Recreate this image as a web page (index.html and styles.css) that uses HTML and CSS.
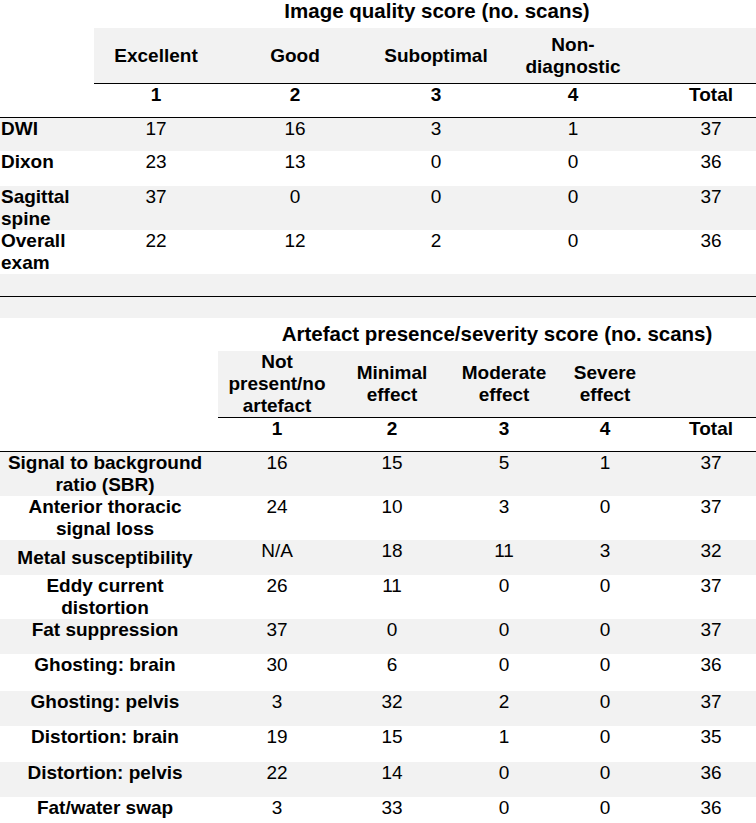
FILE: index.html
```html
<!DOCTYPE html>
<html lang="en">
<head>
<meta charset="utf-8">
<title>Image quality and artefact scores</title>
<link rel="stylesheet" href="styles.css">
</head>
<body>
<table class="tbl quality">
  <colgroup>
    <col class="q-label"><col class="q-c1"><col class="q-c2"><col class="q-c3"><col class="q-c4"><col class="q-c5">
  </colgroup>
  <tr class="row-title">
    <td></td>
    <th colspan="5" class="title">Image quality score (no. scans)</th>
  </tr>
  <tr class="row-head">
    <td></td>
    <th class="hd">Excellent</th>
    <th class="hd">Good</th>
    <th class="hd">Suboptimal</th>
    <th class="hd">Non-<br>diagnostic</th>
    <th class="hd last"></th>
  </tr>
  <tr class="row-num">
    <td></td><th>1</th><th>2</th><th>3</th><th>4</th><th class="last">Total</th>
  </tr>
  <tr class="r-dwi shade">
    <th class="lbl">DWI</th><td>17</td><td>16</td><td>3</td><td>1</td><td class="last">37</td>
  </tr>
  <tr class="r-dixon">
    <th class="lbl">Dixon</th><td>23</td><td>13</td><td>0</td><td>0</td><td class="last">36</td>
  </tr>
  <tr class="r-two shade">
    <th class="lbl">Sagittal<br>spine</th><td>37</td><td>0</td><td>0</td><td>0</td><td class="last">37</td>
  </tr>
  <tr class="r-two">
    <th class="lbl">Overall<br>exam</th><td>22</td><td>12</td><td>2</td><td>0</td><td class="last">36</td>
  </tr>
  <tr class="r-end shade">
    <td></td><td></td><td></td><td></td><td></td><td class="last"></td>
  </tr>
</table>
<div class="spacer"></div>
<table class="tbl artefact">
  <colgroup>
    <col class="a-label"><col class="a-c1"><col class="a-c2"><col class="a-c3"><col class="a-c4"><col class="a-c5">
  </colgroup>
  <tr class="row-title2">
    <td></td>
    <th colspan="5" class="title title2">Artefact presence/severity score (no. scans)</th>
  </tr>
  <tr class="row-head2">
    <td></td>
    <th class="hd">Not<br>present/no<br>artefact</th>
    <th class="hd">Minimal<br>effect</th>
    <th class="hd">Moderate<br>effect</th>
    <th class="hd">Severe<br>effect</th>
    <th class="hd last"></th>
  </tr>
  <tr class="row-num2">
    <td></td><th>1</th><th>2</th><th>3</th><th>4</th><th class="last">Total</th>
  </tr>
  <tr class="r-44 shade">
    <th class="lbl">Signal to background<br>ratio (SBR)</th><td>16</td><td>15</td><td>5</td><td>1</td><td class="last">37</td>
  </tr>
  <tr class="r-44">
    <th class="lbl">Anterior thoracic<br>signal loss</th><td>24</td><td>10</td><td>3</td><td>0</td><td class="last">37</td>
  </tr>
  <tr class="r-35 shade">
    <th class="lbl mid">Metal susceptibility</th><td>N/A</td><td>18</td><td>11</td><td>3</td><td class="last">32</td>
  </tr>
  <tr class="r-44">
    <th class="lbl">Eddy current<br>distortion</th><td>26</td><td>11</td><td>0</td><td>0</td><td class="last">37</td>
  </tr>
  <tr class="r-35 shade">
    <th class="lbl">Fat suppression</th><td>37</td><td>0</td><td>0</td><td>0</td><td class="last">37</td>
  </tr>
  <tr class="r-37">
    <th class="lbl">Ghosting: brain</th><td>30</td><td>6</td><td>0</td><td>0</td><td class="last">36</td>
  </tr>
  <tr class="r-35 shade">
    <th class="lbl">Ghosting: pelvis</th><td>3</td><td>32</td><td>2</td><td>0</td><td class="last">37</td>
  </tr>
  <tr class="r-36">
    <th class="lbl">Distortion: brain</th><td>19</td><td>15</td><td>1</td><td>0</td><td class="last">35</td>
  </tr>
  <tr class="r-35 shade">
    <th class="lbl">Distortion: pelvis</th><td>22</td><td>14</td><td>0</td><td>0</td><td class="last">36</td>
  </tr>
  <tr class="r-35">
    <th class="lbl">Fat/water swap</th><td>3</td><td>33</td><td>0</td><td>0</td><td class="last">36</td>
  </tr>
</table>
</body>
</html>
```

FILE: styles.css
```css
html, body {
  margin: 0;
  padding: 0;
  background: #ffffff;
}

body {
  width: 756px;
  font-family: "Liberation Sans", Arial, sans-serif;
  font-size: 19px;
  line-height: 22px;
  color: #000000;
}

.tbl {
  width: 756px;
  table-layout: fixed;
  border-collapse: separate;
  border-spacing: 0;
}

.tbl th,
.tbl td {
  padding: 0;
  text-align: center;
  vertical-align: top;
  font-weight: normal;
  white-space: nowrap;
}

.tbl th {
  font-weight: bold;
}

/* column widths: image quality table */
.q-label { width: 94px; }
.q-c1 { width: 124px; }
.q-c2 { width: 154px; }
.q-c3 { width: 128px; }
.q-c4 { width: 146px; }
.q-c5 { width: 110px; }

/* column widths: artefact table */
.a-label { width: 218px; }
.a-c1 { width: 118px; }
.a-c2 { width: 112px; }
.a-c3 { width: 112px; }
.a-c4 { width: 90px; }
.a-c5 { width: 106px; }

.quality .last { padding-left: 20px; }
.artefact .last { padding-left: 16px; }

/* titles */
.title {
  font-size: 20.5px;
  padding-top: 1px;
}
.quality .title { padding-left: 24px; }
.artefact .title { padding-left: 20px; padding-top: 5px; }

.row-title { height: 28px; }
.row-title2 { height: 33px; }

/* header label rows */
.hd {
  background: #f2f2f2;
  border-bottom: 1px solid #000000;
  vertical-align: middle !important;
}
.row-head { height: 56px; }
.row-head2 { height: 66px; }

/* score number rows */
.row-num > *,
.row-num2 > * {
  border-bottom: 1px solid #000000;
}
.row-num { height: 34px; }
.row-num > * { padding-top: 2px; }
.row-num2 { height: 34px; }
.row-num2 > * { padding-top: 1px; }

/* body rows */
.shade > * { background: #f2f2f2; }

.quality .lbl {
  text-align: left;
  padding-left: 1px;
}
.artefact .lbl {
  padding-right: 8px;
}
.artefact .lbl.mid { vertical-align: middle; }

.r-dwi { height: 33px; }
.r-dwi > * { padding-top: 1px; }
.r-dixon { height: 35px; }
.r-two { height: 44px; }
.r-end { height: 23px; }
.r-end > * { border-bottom: 1px solid #000000; }

.r-44 { height: 44px; }
.r-35 { height: 35px; }
.r-36 { height: 36px; }
.r-37 { height: 37px; }

.spacer {
  height: 21px;
  background: #f2f2f2;
}
```
